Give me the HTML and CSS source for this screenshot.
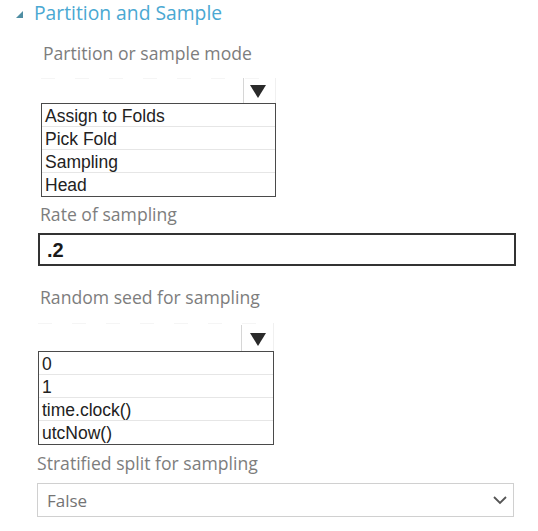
FILE: index.html
```html
<!DOCTYPE html>
<html>
<head>
<meta charset="utf-8">
<link rel="stylesheet" href="styles.css">
</head>
<body>
<div class="panel">
  <div class="header">
    <svg class="collapse" width="7" height="7" viewBox="0 0 7 7"><polygon points="7,0 7,7 0,7" fill="#4f8ea3"/></svg>
    <span class="title">Partition and Sample</span>
  </div>

  <div class="field mode">
    <div class="label">Partition or sample mode</div>
    <div class="dropdown">
      <div class="arrow-row">
        <span class="divider"></span>
        <svg class="tri" width="16" height="13" viewBox="0 0 16 13"><polygon points="0,0 16,0 8,13" fill="#2a2a2a"/></svg>
      </div>
      <ul class="options">
        <li>Assign to Folds</li>
        <li>Pick Fold</li>
        <li>Sampling</li>
        <li>Head</li>
      </ul>
    </div>
  </div>

  <div class="field rate">
    <div class="label">Rate of sampling</div>
    <div class="textbox">.2</div>
  </div>

  <div class="field seed">
    <div class="label">Random seed for sampling</div>
    <div class="dropdown">
      <div class="arrow-row">
        <span class="divider"></span>
        <svg class="tri" width="16" height="13" viewBox="0 0 16 13"><polygon points="0,0 16,0 8,13" fill="#2a2a2a"/></svg>
      </div>
      <ul class="options">
        <li>0</li>
        <li>1</li>
        <li>time.clock()</li>
        <li>utcNow()</li>
      </ul>
    </div>
  </div>

  <div class="field strat">
    <div class="label">Stratified split for sampling</div>
    <div class="select">
      <span>False</span>
      <svg class="chev" width="14" height="9" viewBox="0 0 14 9"><polyline points="1,1 7,7 13,1" fill="none" stroke="#555" stroke-width="1.8"/></svg>
    </div>
  </div>
</div>
</body>
</html>
```

FILE: styles.css
```css
html, body {
  margin: 0;
  padding: 0;
  background: #fff;
}

.panel {
  width: 538px;
  height: 531px;
  font-family: "Open Sans", "Noto Sans", sans-serif;
}

.header {
  display: flex;
  align-items: center;
  height: 26px;
  padding-left: 16px;
}

.collapse {
  margin-right: 11px;
  margin-top: 2px;
}

.title {
  font-size: 19.3px;
  color: #4aa8d2;
  line-height: 26px;
  margin-top: -1px;
}

.label {
  font-size: 17.6px;
  line-height: 22px;
  color: #7d7d7d;
}

.mode {
  padding-left: 43px;
  margin-top: 16px;
}

.dropdown {
  width: 235px;
  margin-left: -2px;
}

.arrow-row {
  height: 25px;
  margin-top: 14px;
  display: flex;
  align-items: flex-start;
  justify-content: flex-end;
  padding-right: 9px;
  border-right: 1px solid #f0f0f0;
  background: repeating-linear-gradient(90deg, #f5f5f5 0 14px, transparent 14px 34px) no-repeat 0 0 / 100% 1px;
}

.divider {
  width: 1px;
  height: 25px;
  background: #d6d6d6;
  margin-right: 6px;
}

.tri {
  margin-top: 7px;
}

.options {
  list-style: none;
  margin: 0;
  padding: 0;
  border: 1px solid #4a4a4a;
  font-family: "Liberation Sans", Arial, sans-serif;
  font-size: 17.5px;
  color: #222;
}

.options li {
  height: 23px;
  box-sizing: border-box;
  line-height: 24px;
  padding-left: 3px;
  border-bottom: 1px solid #e6e6e6;
}

.options li:last-child {
  border-bottom: none;
}

.rate {
  padding-left: 40px;
  margin-top: 6px;
}

.textbox {
  margin-top: 8px;
  margin-left: -2px;
  width: 478px;
  height: 33px;
  box-sizing: border-box;
  border: 2px solid #333;
  font-family: "Liberation Sans", Arial, sans-serif;
  font-size: 20px;
  font-weight: bold;
  line-height: 28px;
  padding: 1px 0 0 7px;
  color: #1a1a1a;
}

.seed {
  padding-left: 40px;
  margin-top: 20px;
}

.seed .dropdown {
  width: 236px;
}

.seed .arrow-row {
  height: 28px;
  margin-top: 15px;
  padding-right: 7px;
}

.seed .divider {
  margin-top: 2px;
  height: 26px;
  margin-right: 8px;
}

.seed .tri {
  margin-top: 10px;
}

.strat {
  padding-left: 37px;
  margin-top: 7px;
}

.select {
  margin-top: 9px;
  width: 477px;
  height: 34px;
  box-sizing: border-box;
  border: 1px solid #d0d0d0;
  display: flex;
  align-items: center;
  justify-content: space-between;
  padding: 1px 6px 0 9px;
  font-size: 17px;
  color: #747474;
}
```
